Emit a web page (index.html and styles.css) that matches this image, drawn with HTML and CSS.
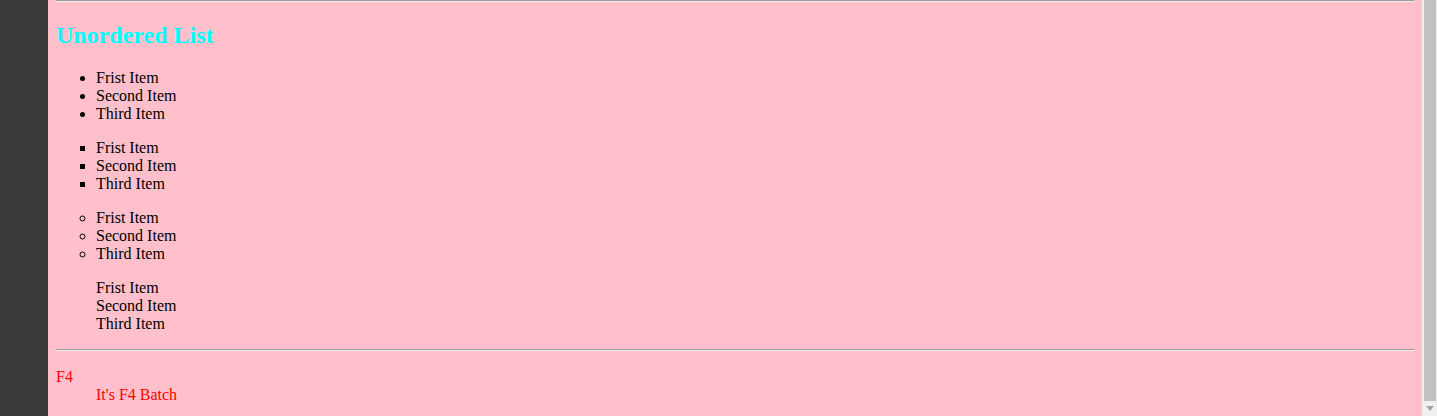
FILE: index.html
```html
<!DOCTYPE html>
<html>
<head>
<meta charset="utf-8">
<link rel="stylesheet" href="styles.css">
</head>
<body>
<div class="shell">
  <div class="side"></div>
  <div class="page">
    <hr class="rule first">
    <h2 class="title">Unordered List</h2>
    <ul class="list disc">
      <li>Frist Item</li>
      <li>Second Item</li>
      <li>Third Item</li>
    </ul>
    <ul class="list square">
      <li>Frist Item</li>
      <li>Second Item</li>
      <li>Third Item</li>
    </ul>
    <ul class="list circle">
      <li>Frist Item</li>
      <li>Second Item</li>
      <li>Third Item</li>
    </ul>
    <ul class="list none">
      <li>Frist Item</li>
      <li>Second Item</li>
      <li>Third Item</li>
    </ul>
    <hr class="rule">
    <dl class="defs">
      <dt>F4</dt>
      <dd>It's F4 Batch</dd>
    </dl>
  </div>
  <div class="scrollbar">
    <div class="track"><div class="thumb"></div></div>
    <div class="arrow"><span class="tri"></span></div>
  </div>
</div>
</body>
</html>
```
FILE: styles.css
```css
html, body {
  margin: 0;
  padding: 0;
  height: 416px;
  overflow: hidden;
}
body {
  font-family: "Liberation Serif", "Times New Roman", serif;
  font-size: 16px;
  line-height: 18px;
}
.shell {
  display: flex;
  height: 416px;
}
.side {
  width: 48px;
  flex: none;
  background: #3b3b3b;
}
.page {
  flex: 1;
  background: #ffc0cb;
  padding: 0 8px;
  overflow: hidden;
}
.rule {
  margin: 16px 0 8px;
  border: none;
  border-top: 1px solid #9a9a9a;
  border-bottom: 1px solid #eeeeee;
  height: 0;
}
.rule.first {
  margin-top: 0;
}
.title {
  color: #00ffff;
  font-size: 24px;
  line-height: 28px;
  font-weight: bold;
  margin: 19px 0 20px;
}
.list {
  margin: 0 0 16px;
  padding-left: 40px;
}
.list.disc { list-style-type: disc; }
.list.square { list-style-type: square; }
.list.circle { list-style-type: circle; }
.list.none { list-style-type: none; }
.defs {
  margin: 17px 0 16px;
  color: #ff0000;
}
.defs dd {
  margin-left: 40px;
}
.scrollbar {
  width: 13px;
  flex: none;
  background: #f0f0f0;
  display: flex;
  flex-direction: column;
  padding-left: 2px;
}
.track {
  flex: 1;
  display: flex;
}
.thumb {
  width: 12px;
  height: 401px;
  background: #c1c1c1;
}
.arrow {
  height: 15px;
  display: flex;
  align-items: center;
  justify-content: center;
  padding-right: 1px;
}
.tri {
  width: 0;
  height: 0;
  border-left: 4px solid transparent;
  border-right: 4px solid transparent;
  border-top: 5px solid #a3a3a3;
}
```
